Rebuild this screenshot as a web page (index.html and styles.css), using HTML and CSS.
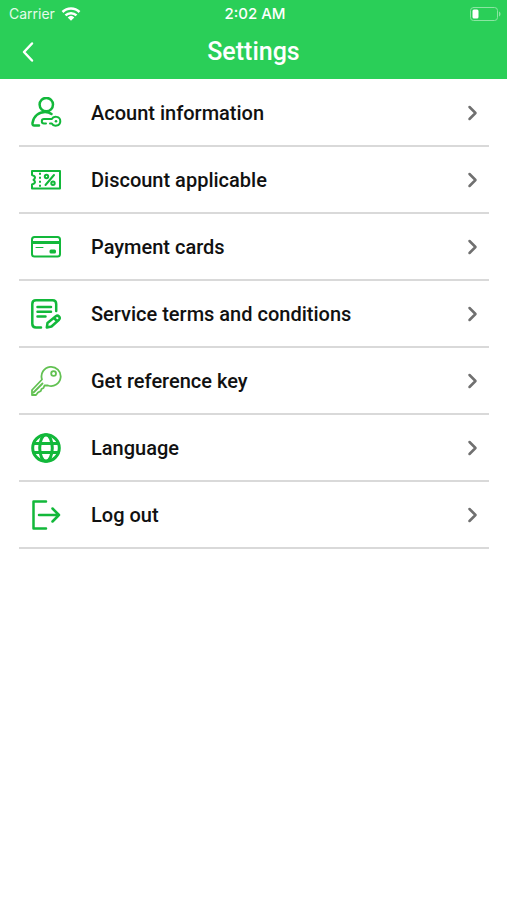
FILE: index.html
```html
<!DOCTYPE html>
<html lang="en">
<head>
<meta charset="utf-8">
<meta name="viewport" content="width=device-width, initial-scale=1">
<title>Settings</title>
<link rel="stylesheet" href="styles.css">
</head>
<body>
<header class="header">
  <div class="status">
    <div class="carrier">
      <span>Carrier</span>
      <svg class="wifi" viewBox="0 0 20 16" aria-hidden="true"><path d="M1.500 6A12 12 0 0 1 18.500 6M4.500 9.400a7.800 7.800 0 0 1 11 0"/><path class="solid" d="M6.700 11.400a4.800 4.800 0 0 1 6.600 0L10 14.800z"/></svg>
    </div>
    <time class="time">2:02 AM</time>
    <svg class="battery" viewBox="0 0 32 16" aria-hidden="true"><rect class="case" x="1.500" y="1.500" width="27" height="13" rx="3"/><path class="tip" d="M30 5.500c2 .8 2 4.200 0 5z"/><rect class="charge" x="3.500" y="3.500" width="6" height="9" rx="1.500"/></svg>
  </div>
  <div class="titlebar">
    <button class="back" type="button" aria-label="Back"><svg viewBox="0 0 14 24" aria-hidden="true"><path d="M11 3.500L3 12L11 20.500"/></svg></button>
    <h1 class="title">Settings</h1>
  </div>
</header>
<main>
  <ul class="list">
    <li><a class="row" href="#account">
      <svg class="icon" viewBox="0 0 32 32" aria-hidden="true"><circle cx="16.300" cy="7.600" r="6.700"/><path d="M9 28.500H4.200Q2.200 28.500 2.500 26C3.500 19 9 15 15 15Q19 15 21.500 17"/><path class="medium" d="M21.800 22C23.500 18.600 30.300 19 30.300 24.200S23.500 29.800 21.800 26.500H20M21.800 22H14Q11.800 22 11.800 24.200T14 26.500H16"/><circle class="dot" cx="26" cy="24.200" r="1.300"/></svg>
      <span class="label">Acount information</span><svg class="chevron" viewBox="0 0 12 18" aria-hidden="true"><path d="M3.500 3L9.500 9L3.500 15"/></svg></a></li>
    <li><a class="row" href="#discount">
      <svg class="icon medium" viewBox="0 0 32 32" aria-hidden="true"><path d="M2 7H30V24.500H2V20.500Q5 19.500 5 18Q5 16.800 3.500 15.800Q5 14.800 5 13.500Q5 12 2 11Z"/><path class="dash" d="M10 8.800V24"/><path d="M24 11L15.500 21"/><circle cx="16.500" cy="12.500" r="1.700"/><circle cx="23" cy="19.200" r="1.700"/></svg>
      <span class="label">Discount applicable</span><svg class="chevron" viewBox="0 0 12 18" aria-hidden="true"><path d="M3.500 3L9.500 9L3.500 15"/></svg></a></li>
    <li><a class="row" href="#cards">
      <svg class="icon" viewBox="0 0 32 32" aria-hidden="true"><rect class="medium" x="2" y="6" width="28" height="19.500" rx="2.500"/><path class="bar" d="M2 11.500H30"/><path class="thin" d="M6 16.500H13"/><rect class="dot" x="19.500" y="18.500" width="6.500" height="4" rx="1.500"/></svg>
      <span class="label">Payment cards</span><svg class="chevron" viewBox="0 0 12 18" aria-hidden="true"><path d="M3.500 3L9.500 9L3.500 15"/></svg></a></li>
    <li><a class="row" href="#terms">
      <svg class="icon" viewBox="0 0 32 32" aria-hidden="true"><path d="M11 29.500H6Q2.300 29.500 2.300 25.800V6Q2.300 2.300 6 2.300H22.500Q26.200 2.300 26.200 6V13"/><path d="M7.500 9H21M7.500 13.800H21M7.500 18.500H15.500"/><path d="M16.800 29.500L17.500 25L25.800 18.200Q27.500 17 29 18.500Q30.500 20 29 21.700L21.500 28.500Z M24 20L27 23"/></svg>
      <span class="label">Service terms and conditions</span><svg class="chevron" viewBox="0 0 12 18" aria-hidden="true"><path d="M3.500 3L9.500 9L3.500 15"/></svg></a></li>
    <li><a class="row" href="#key">
      <svg class="icon key" viewBox="0 0 32 32" aria-hidden="true"><path d="M12 14.500A9.600 9.600 0 1 1 18 20.500L14.500 20.500L13.500 23L11.500 24L10.800 26L8 27.500L6 30H2V25Z"/><circle cx="23.600" cy="8.500" r="2.400"/><path d="M3.500 27.500L12.500 18.500"/></svg>
      <span class="label">Get reference key</span><svg class="chevron" viewBox="0 0 12 18" aria-hidden="true"><path d="M3.500 3L9.500 9L3.500 15"/></svg></a></li>
    <li><a class="row" href="#language">
      <svg class="icon globe" viewBox="0 0 32 32" aria-hidden="true"><circle cx="16" cy="16" r="13.300"/><ellipse cx="16" cy="16" rx="6.300" ry="13.300"/><path d="M4 11.500H28M4 20.500H28"/></svg>
      <span class="label">Language</span><svg class="chevron" viewBox="0 0 12 18" aria-hidden="true"><path d="M3.500 3L9.500 9L3.500 15"/></svg></a></li>
    <li><a class="row" href="#logout">
      <svg class="icon" viewBox="0 0 32 32" aria-hidden="true"><path d="M16 2.500H3.500V29.500H16M9 16H29M22.500 9.500L29 16L22.500 22.500"/></svg>
      <span class="label">Log out</span><svg class="chevron" viewBox="0 0 12 18" aria-hidden="true"><path d="M3.500 3L9.500 9L3.500 15"/></svg></a></li>
  </ul>
</main>
</body>
</html>
```
FILE: styles.css
```css
* {
  box-sizing: border-box;
}

body {
  margin: 0;
  background: #fff;
  color: #111;
  font-family: Roboto, sans-serif;
}

svg {
  display: block;
  fill: none;
  stroke-linecap: round;
  stroke-linejoin: round;
}

.header {
  background: #2acf58;
  color: #fff;
}

.status {
  display: grid;
  grid-template-columns: 1fr auto 1fr;
  align-items: center;
  height: 27px;
  padding: 0 6px 0 9px;
  font-family: Inter, sans-serif;
  font-size: 14px;
}

.carrier {
  display: flex;
  align-items: center;
  gap: 6px;
  color: #e4fbe9;
}

.wifi {
  width: 20px;
  height: 16px;
  stroke: #fff;
  stroke-width: 2.5;
  stroke-linecap: butt;
}

.wifi .solid {
  fill: #fff;
  stroke: none;
}

.time {
  font-size: 15px;
  font-weight: 500;
}

.battery {
  justify-self: end;
  width: 32px;
  height: 16px;
}

.case {
  stroke: #8be5a2;
}

.tip {
  fill: #8be5a2;
}

.charge {
  fill: #fff;
}

.titlebar {
  display: grid;
  grid-template-columns: 40px 1fr 40px;
  align-items: center;
  height: 52px;
  padding: 0 8px 2px;
}

.back {
  display: grid;
  place-items: center;
  height: 40px;
  padding: 0;
  border: 0;
  background: none;
}

.back svg {
  width: 14px;
  height: 24px;
  stroke: #fff;
  stroke-width: 2.5;
}

.title {
  margin: 0;
  font-size: 25px;
  font-weight: 500;
  line-height: 32px;
  text-align: center;
}

.list {
  margin: 0;
  padding: 1px 18px 0 19px;
  list-style: none;
}

.row {
  display: flex;
  align-items: center;
  height: 67px;
  padding: 0 11px;
  border-bottom: 2px solid #d9d9d9;
  color: inherit;
  text-decoration: none;
}

.icon {
  width: 32px;
  height: 32px;
  stroke: #12b83a;
  stroke-width: 2.5;
}

.icon.medium,
.icon .medium {
  stroke-width: 2;
}

.icon .thin {
  stroke-width: 1;
}

.icon .dash {
  stroke-dasharray: 2 2;
  stroke-linecap: butt;
}

.icon .bar {
  stroke-width: 3;
  stroke-linecap: butt;
}

.icon .dot {
  fill: #12b83a;
  stroke: none;
}

.icon.key {
  stroke: #62c152;
  stroke-width: 1.8;
}

.icon.globe {
  stroke-width: 3;
}

.label {
  flex: 1;
  margin-left: 29px;
  font-size: 20px;
  font-weight: 500;
  line-height: 24px;
}

.chevron {
  width: 12px;
  height: 18px;
  stroke: #707070;
  stroke-width: 2.5;
}
```
